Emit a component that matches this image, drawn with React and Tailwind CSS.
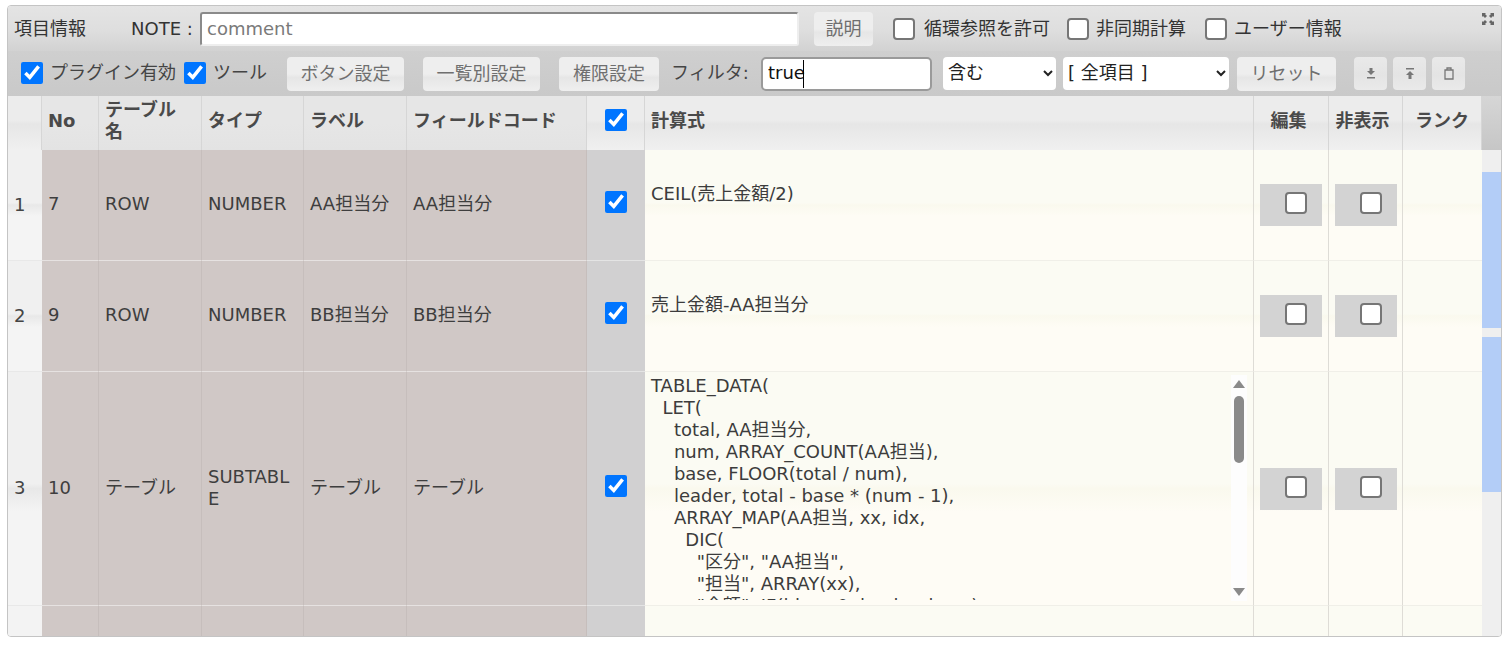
const FONT = "font-['DejaVu_Sans','Noto_Sans_CJK_JP',sans-serif]"

const HEAD_A = "bg-[linear-gradient(#e6e6e6,#e6e6e6_50%,#e3e3e3)]"
const HEAD_B = "bg-[linear-gradient(#ececec,#ececec_45%,#e6e6e6_52%,#f0f0f0)]"
const FORMULA_BG = "bg-[linear-gradient(#fbfbf3,#fbfbf3_48%,#faf9ee_50%,#fefcf5_60%,#fefcf5)]"
const INDEX_BG = "bg-[linear-gradient(#f0f0f0,#f0f0f0_48%,#e8e8e8_50%,#f4f4f4_60%,#f4f4f4)]"

const FORMULA = `TABLE_DATA(
  LET(
    total, AA担当分,
    num, ARRAY_COUNT(AA担当),
    base, FLOOR(total / num),
    leader, total - base * (num - 1),
    ARRAY_MAP(AA担当, xx, idx,
      DIC(
        "区分", "AA担当",
        "担当", ARRAY(xx),
        "金額", IF(idx = 0, leader, base)
      )
    )
  )
)`

const ROWS = [
  { index: 1, no: "7", table: "ROW", type: "NUMBER", label: "AA担当分", code: "AA担当分", formula: "CEIL(売上金額/2)", height: "h-[111px]" },
  { index: 2, no: "9", table: "ROW", type: "NUMBER", label: "BB担当分", code: "BB担当分", formula: "売上金額-AA担当分", height: "h-[111px]" },
  { index: 3, no: "10", table: "テーブル", type: "SUBTABLE", label: "テーブル", code: "テーブル", formula: FORMULA, height: "h-[234px]", long: true },
]

function Check({ checked, className = "" }) {
  const look = checked
    ? "accent-[#0075ff]"
    : "appearance-none rounded-[4px] border-2 border-[#767676] bg-white"
  return (
    <input
      type="checkbox"
      defaultChecked={checked}
      className={`m-0 block h-[22px] w-[22px] shrink-0 ${look} ${className}`}
    />
  )
}

function ToolButton({ children, className = "" }) {
  return (
    <button className={`h-[34px] rounded-[4px] bg-[linear-gradient(#eeeeee,#eeeeee_50%,#e6e6e6_60%,#efefef)] pb-[1px] text-[18px] text-[#6f6f6f] ${className}`}>
      {children}
    </button>
  )
}

function IconButton({ children, className = "" }) {
  return (
    <button className={`flex h-[33px] w-[33px] items-center justify-center rounded-[4px] bg-[linear-gradient(#e9e9e9,#e4e4e4_55%,#eaeaea)] text-[#777] ${className}`}>
      {children}
    </button>
  )
}

function Formula({ row }) {
  if (!row.long) {
    return <div className="h-[44px] pl-[6px] text-[18px] leading-[22px] text-[#3c3c3c]">{row.formula}</div>
  }
  return (
    <div className="flex h-[228px] items-stretch">
      <pre className={`h-[225px] flex-1 overflow-hidden whitespace-pre pl-[6px] text-[18px] leading-[22px] text-[#3c3c3c] ${FONT}`}>{row.formula}</pre>
      <div className="mr-[6px] flex h-[226px] w-[16px] flex-col items-center bg-[#fdfdfd]">
        <svg width="12" height="8" viewBox="0 0 12 8" className="mt-[5px] block fill-[#8a8a8a]"><path d="M6 0 L12 8 L0 8 Z" /></svg>
        <div className="mt-[8px] h-[67px] w-[10px] rounded-[5px] bg-[#8a8a8a]" />
        <svg width="12" height="8" viewBox="0 0 12 8" className="mt-auto mb-[5px] block fill-[#8a8a8a]"><path d="M6 8 L12 0 L0 0 Z" /></svg>
      </div>
    </div>
  )
}

function CheckBlock() {
  return (
    <div className="ml-[6px] h-[42px] w-[62px] bg-[#d3d3d3] pl-[25px] pt-[8px]">
      <Check />
    </div>
  )
}

export default function App() {
  const cell = "border-r border-[#c6bebc] bg-[#d0c8c6] px-[6px] pb-[2px] text-[18px] leading-[22px] text-[#3e3e3e] align-middle"
  const head = "border-r border-[#d6d6d6] pl-[6px] pb-[5px] align-middle text-[18px] font-bold leading-[22px] text-[#4a4a4a]"

  return (
    <div className={`bg-white pl-[7px] pt-[5px] ${FONT}`}>
      <div className="flex h-[632px] w-[1495px] flex-col overflow-hidden rounded-[4px] border border-[#c4c4c4]">
        {/* top bar */}
        <div className="relative flex h-[45px] shrink-0 items-center bg-[linear-gradient(#e4e4e4,#dedede_55%,#d2d2d2)] text-[18px] text-[#333]">
          <span className="ml-[6px] w-[72px] whitespace-nowrap">項目情報</span>
          <span className="ml-[45px] w-[69px] whitespace-pre">NOTE :</span>
          <input
            placeholder="comment"
            className="h-[34px] w-[599px] rounded-[3px] border-2 border-[#8a8a8a] border-b-[#eeeeee] border-r-[#eeeeee] bg-white px-[5px] text-[18px] outline-none placeholder:text-[#7a7a7a]"
          />
          <ToolButton className="ml-[15px] w-[59px]">説明</ToolButton>
          <Check className="ml-[20px]" />
          <span className="ml-[9px] w-[124px] whitespace-nowrap">循環参照を許可</span>
          <Check className="ml-[19px]" />
          <span className="ml-[7px] w-[90px] whitespace-nowrap">非同期計算</span>
          <Check className="ml-[19px]" />
          <span className="ml-[7px] whitespace-nowrap">ユーザー情報</span>
          <svg width="12" height="12" viewBox="0 0 12 12" className="absolute right-[7px] top-[7px] fill-[#666]">
            <path d="M0 0H4L3 1L5 3L3 5L1 3L0 4ZM12 0V4L11 3L9 5L7 3L9 1L8 0ZM0 12V8L1 9L3 7L5 9L3 11L4 12ZM12 12H8L9 11L7 9L9 7L11 9L12 8Z" />
          </svg>
        </div>

        {/* filter bar */}
        <div className="flex h-[45px] shrink-0 items-center bg-[linear-gradient(#cfcfcf,#c9c9c9)] text-[18px] text-[#444]">
          <Check checked className="mb-[2px] ml-[13px]" />
          <span className="mb-[3px] ml-[7px] w-[126px] whitespace-nowrap">プラグイン有効</span>
          <Check checked className="mb-[2px] ml-[8px]" />
          <span className="mb-[3px] ml-[7px] w-[55px] whitespace-nowrap">ツール</span>
          <ToolButton className="ml-[19px] w-[117px]">ボタン設定</ToolButton>
          <ToolButton className="ml-[19px] w-[117px]">一覧別設定</ToolButton>
          <ToolButton className="ml-[19px] w-[100px]">権限設定</ToolButton>
          <span className="mb-[3px] ml-[12px] w-[77px] whitespace-nowrap">フィルタ:</span>
          <div className="relative ml-[13px]">
            <input
              defaultValue="true"
              className="block h-[34px] w-[171px] rounded-[5px] border-2 border-[#9a9a9a] bg-white px-[5px] pb-[3px] text-[18px] text-[#111] caret-transparent outline-none"
            />
            <span className="absolute left-[42px] top-[3px] h-[28px] w-px bg-black" />
          </div>
          <select className="ml-[11px] h-[33px] w-[113px] rounded-[4px] bg-white pb-[2px] pl-[1px] text-[18px] text-[#222]">
            <option>含む</option>
          </select>
          <select className="ml-[7px] h-[33px] w-[166px] rounded-[4px] bg-white pb-[2px] pl-[1px] text-[18px] text-[#222]">
            <option>[ 全項目 ]</option>
          </select>
          <ToolButton className="ml-[8px] w-[99px]">リセット</ToolButton>
          <IconButton className="ml-[18px]">
            <svg width="10" height="11" viewBox="0 0 10 11" className="fill-current"><path d="M3.5 0H6.5V3H9L5 7L1 3H3.5ZM1 9H9V10.5H1Z" /></svg>
          </IconButton>
          <IconButton className="ml-[6px]">
            <svg width="10" height="11" viewBox="0 0 10 11" className="fill-current"><path d="M1 0H9V1.5H1ZM5 3L9 7H6.5V11H3.5V7H1Z" /></svg>
          </IconButton>
          <IconButton className="ml-[6px]">
            <svg width="10" height="13" viewBox="0 0 10 13" className="fill-none stroke-current"><path d="M1 3H9V12H1ZM3 3V1H7V3" strokeWidth="1.3" /></svg>
          </IconButton>
        </div>

        {/* table + page scrollbar */}
        <div className="flex min-h-0 flex-1">
          <div className="h-full w-[1474px] shrink-0 overflow-hidden">
            <table className="w-[1474px] table-fixed border-separate border-spacing-0">
              <colgroup>
                <col className="w-[34px]" />
                <col className="w-[57px]" />
                <col className="w-[103px]" />
                <col className="w-[102px]" />
                <col className="w-[103px]" />
                <col className="w-[180px]" />
                <col className="w-[58px]" />
                <col className="w-[609px]" />
                <col className="w-[75px]" />
                <col className="w-[74px]" />
                <col className="w-[79px]" />
              </colgroup>
              <thead>
                <tr className="h-[54px]">
                  <th className={`${head} ${HEAD_B}`} />
                  <th className={`${head} ${HEAD_A} text-left`}>No</th>
                  <th className={`${head} ${HEAD_A} text-left`}>テーブル<br />名</th>
                  <th className={`${head} ${HEAD_A} text-left`}>タイプ</th>
                  <th className={`${head} ${HEAD_A} text-left`}>ラベル</th>
                  <th className={`${head} ${HEAD_A} whitespace-nowrap text-left`}>フィールドコード</th>
                  <th className={`${head} ${HEAD_B}`}>
                    <Check checked className="mb-[2px] ml-[12px]" />
                  </th>
                  <th className={`${head} ${HEAD_B} text-left`}>計算式</th>
                  <th className={`${head} ${HEAD_B} pr-[11px] text-center`}>編集</th>
                  <th className={`${head} ${HEAD_B} pr-[12px] text-center`}>非表示</th>
                  <th className={`${head} ${HEAD_B} pr-[6px] text-center`}>ランク</th>
                </tr>
              </thead>
              <tbody>
                {ROWS.map((row) => (
                  <tr key={row.index} className={row.height}>
                    <td className={`border-b border-[#e8e8e8] ${INDEX_BG} pb-[2px] pl-[6px] text-[18px] text-[#444]`}>{row.index}</td>
                    <td className={`${cell} border-b border-b-[#e6e2e1]`}>{row.no}</td>
                    <td className={`${cell} border-b border-b-[#e6e2e1]`}>{row.table}</td>
                    <td className={`${cell} border-b border-b-[#e6e2e1] break-all`}>{row.type}</td>
                    <td className={`${cell} border-b border-b-[#e6e2e1]`}>{row.label}</td>
                    <td className={`${cell} border-b border-b-[#e6e2e1]`}>{row.code}</td>
                    <td className="border-b border-b-[#e4e4e4] bg-[#d1d0d1] pb-[6px] align-middle">
                      <Check checked className="ml-[18px]" />
                    </td>
                    <td className={`border-b border-r border-b-[#f0efe8] border-r-[#dedcd6] ${FORMULA_BG} align-middle`}>
                      <Formula row={row} />
                    </td>
                    <td className={`border-b border-r border-b-[#f0efe8] border-r-[#dedcd6] ${FORMULA_BG} align-middle`}>
                      <CheckBlock />
                    </td>
                    <td className={`border-b border-r border-b-[#f0efe8] border-r-[#dedcd6] ${FORMULA_BG} align-middle`}>
                      <CheckBlock />
                    </td>
                    <td className={`border-b border-b-[#f0efe8] ${FORMULA_BG}`} />
                  </tr>
                ))}
                <tr className="h-[30px]">
                  <td className="bg-[#f3f3f3]" />
                  <td className={cell} />
                  <td className={cell} />
                  <td className={cell} />
                  <td className={cell} />
                  <td className={cell} />
                  <td className="bg-[#d1d0d1]" />
                  <td className="border-r border-[#dedcd6] bg-[#fbfbf3]" />
                  <td className="border-r border-[#dedcd6] bg-[#fbfbf3]" />
                  <td className="border-r border-[#dedcd6] bg-[#fbfbf3]" />
                  <td className="bg-[#fbfbf3]" />
                </tr>
              </tbody>
            </table>
          </div>

          {/* scrollbar with search marks */}
          <div className="flex h-full flex-1 flex-col bg-[#efefef]">
            <div className="h-[54px] shrink-0 bg-[linear-gradient(#d6d6d6,#c6c6c6)]" />
            <div className="h-[22px] shrink-0" />
            <div className="h-[156px] shrink-0 bg-[#b3cdf7]" />
            <div className="h-[9px] shrink-0" />
            <div className="h-[155px] shrink-0 bg-[#b3cdf7]" />
          </div>
        </div>
      </div>
    </div>
  )
}
